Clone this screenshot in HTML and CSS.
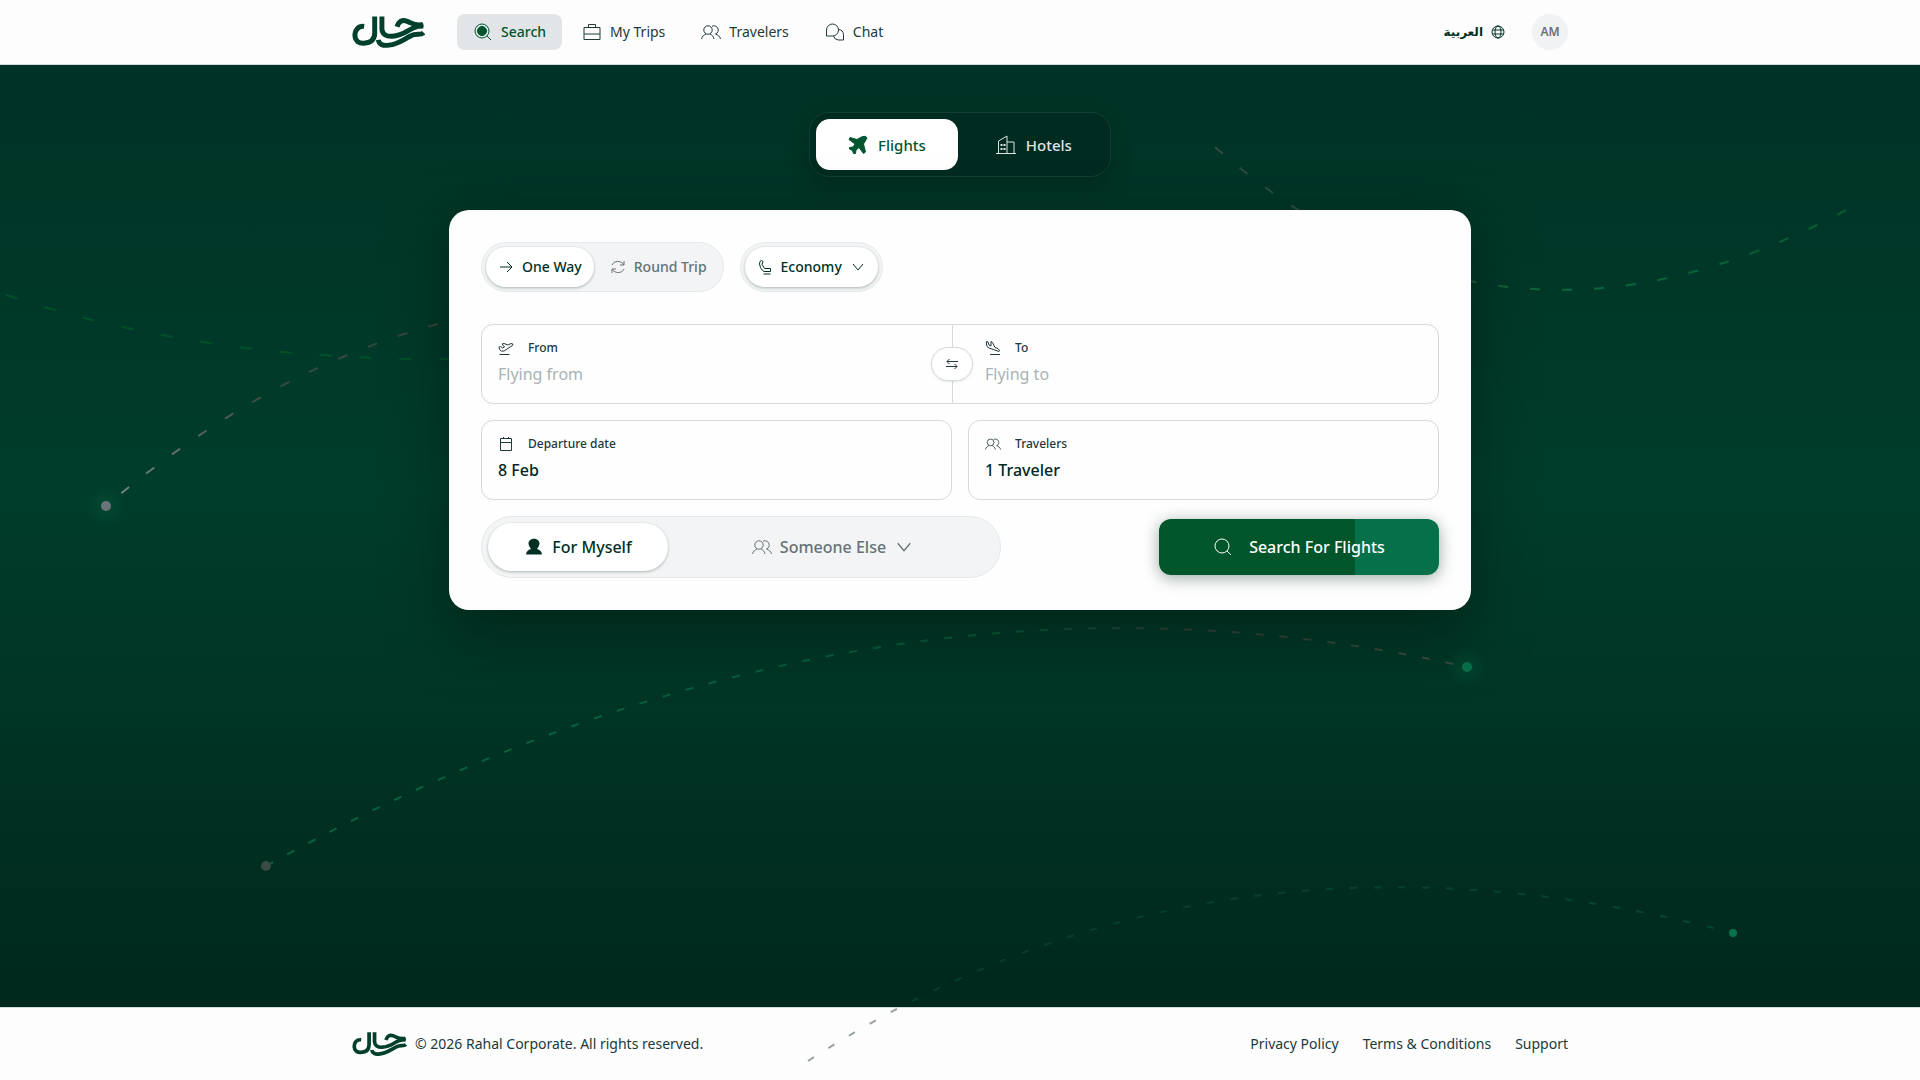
FILE: index.html
```html
<!DOCTYPE html>
<html lang="en">
<head>
  <meta charset="UTF-8" />
  <meta name="viewport" content="width=device-width, initial-scale=1.0"/>
  <title>Rahal Corporate</title>
  <link rel="stylesheet" href="styles.css">
</head>
<body>
  <!-- shared icons -->
  <svg class="sprite" aria-hidden="true">
    <symbol id="logo" viewBox="34 44 222 102">
      <g fill="none" stroke="#00402c" stroke-width="15">
        <path d="M71 78C53 76 42 90 43 107C44 123 56 130 70 129C92 128 103 117 103 98V48"/>
        <path d="M125 48V86C126 101 138 109 156 108C188 107 203 90 222 82C232 77 242 77 251 77"/>
        <path d="M171 79C176 62 187 57 200 62C214 67 228 78 250 72"/>
        <path d="M114 119C116 132 127 138 146 135C181 131 199 110 222 103C235 100 244 105 252 97"/>
      </g>
    </symbol>
    <symbol id="people" viewBox="0 0 20 20">
      <circle cx="7" cy="8" r="4.200"/>
      <path d="M.500 17C1 14.500 3 12.800 5 12M9 12C11 12.800 12.500 14.500 13 17M11 4.300C15 2.500 18 6 17 9.500Q16.300 11.500 14.500 12C17 12.800 19 14.500 19.500 17"/>
    </symbol>
    <symbol id="chevron" viewBox="0 0 16 16">
      <path d="M3 5l5 6 5-6"/>
    </symbol>
  </svg>

  <svg class="routes" viewBox="0 0 1920 1080" preserveAspectRatio="none" aria-hidden="true">
    <defs>
      <linearGradient id="routeGray">
        <stop offset="0" stop-color="#7c8683"/>
        <stop offset="0.500" stop-color="#38493f"/>
        <stop offset="1" stop-color="#34453e"/>
      </linearGradient>
      <linearGradient id="routeGreen">
        <stop offset="0" stop-color="#07633f"/>
        <stop offset="0.600" stop-color="#085c3d"/>
        <stop offset="0.750" stop-color="#32443c"/>
        <stop offset="1" stop-color="#38493f"/>
      </linearGradient>
      <linearGradient id="routeFall">
        <stop offset="0" stop-color="#34493f"/>
        <stop offset="0.400" stop-color="#1c5b3e"/>
        <stop offset="0.600" stop-color="#08683f"/>
        <stop offset="1" stop-color="#075c33"/>
      </linearGradient>
      <linearGradient id="routeFoot" gradientUnits="userSpaceOnUse" x1="800" y1="0" x2="1733" y2="0">
        <stop offset="0" stop-color="#99a19f"/>
        <stop offset="0.105" stop-color="#99a19f"/>
        <stop offset="0.110" stop-color="#063c2b"/>
        <stop offset="1" stop-color="#064630"/>
      </linearGradient>
      <radialGradient id="glow">
        <stop offset="0" stop-color="#0a6b45" stop-opacity="0.300"/>
        <stop offset="1" stop-color="#0a6b45" stop-opacity="0"/>
      </radialGradient>
    </defs>
    <g fill="none" stroke-width="2">
      <path d="M6 295Q205 361 449 359" stroke="#00502b" stroke-dasharray="12 28"/>
      <path d="M438 324Q267 370 106 506" stroke="url(#routeGray)" stroke-dasharray="10 22"/>
      <path d="M1215 147Q1500 398 1850 208" stroke="url(#routeFall)" stroke-dasharray="10 22"/>
      <path d="M266 866Q867 532 1467 667" stroke="url(#routeGreen)" stroke-dasharray="8 16"/>
      <path d="M808 1061Q1215 798 1733 933" stroke="url(#routeFoot)" stroke-dasharray="7 17"/>
    </g>
    <circle cx="106" cy="506" r="20" fill="url(#glow)"/>
    <circle cx="1467" cy="667" r="20" fill="url(#glow)"/>
    <circle cx="106" cy="506" r="5" fill="#6b7478"/>
    <circle cx="266" cy="866" r="5" fill="#3a4a45"/>
    <circle cx="1467" cy="667" r="5" fill="#07724b"/>
    <circle cx="1733" cy="933" r="4" fill="#07724b"/>
  </svg>

  <header class="header">
    <div class="container">
      <a class="brand" href="#" aria-label="Rahal"><svg class="logo"><use href="#logo"/></svg></a>
      <nav class="nav">
        <a class="nav-link active" href="#">
          <svg class="icon" viewBox="0 0 20 20"><circle cx="9" cy="9" r="7"/><circle cx="9" cy="9" r="4.500" fill="currentColor"/><path d="M14 14l4 4"/></svg>
          Search
        </a>
        <a class="nav-link" href="#">
          <svg class="icon" viewBox="0 0 20 20"><path d="M2 5.500h16v12H2zM2 12h16M6.500 5.500v-3h7v3"/></svg>
          My Trips
        </a>
        <a class="nav-link" href="#">
          <svg class="icon"><use href="#people"/></svg>
          Travelers
        </a>
        <a class="nav-link" href="#">
          <svg class="icon" viewBox="0 0 20 20"><path d="M1.500 14V8A6 6 0 1 1 7.500 14zM13.500 7.500A5.500 5.500 0 0 1 18.500 12.500V18H13.500A5.500 5.500 0 0 1 8.500 14"/></svg>
          Chat
        </a>
      </nav>
      <button class="lang" type="button">
        <span lang="ar">العربية</span>
        <svg class="icon-globe" viewBox="0 0 14 14"><circle cx="7" cy="7" r="6"/><ellipse cx="7" cy="7" rx="3" ry="6"/><path d="M1.500 5h11M1.500 9h11"/></svg>
      </button>
      <button class="avatar" type="button">AM</button>
    </div>
  </header>

  <main class="hero">
    <div class="tabs">
      <button class="tab active" type="button">
        <svg class="icon" viewBox="0 0 20 20"><path fill="currentColor" stroke-linejoin="round" d="M2 2.500L9 4.500L14.500 1.500Q18.500 .500 19 3L15.500 9L17.500 17L15.500 18.500L11 12.500L8 15L7.500 18.500L5.500 18.500L4.500 15.500L1.500 14L1.500 12.500L5 12L7 9L1 4.500Z"/></svg>
        Flights
      </button>
      <button class="tab" type="button">
        <svg class="icon" viewBox="0 0 20 20"><path d="M0 18.500h20M2.500 18V6L11 1v17M11 7h7v11"/><path stroke-width="2" stroke-dasharray="2 2" d="M5.500 9v7M8.500 9v7"/></svg>
        Hotels
      </button>
    </div>

    <form class="card">
      <div class="options">
        <div class="pill-group">
          <button class="pill active" type="button">
            <svg class="icon-sm" viewBox="0 0 16 16"><path d="M2 8h12M9 3l5 5-5 5"/></svg>
            One Way
          </button>
          <button class="pill" type="button">
            <svg class="icon-sm" viewBox="0 0 16 16"><path d="M2 6C4 1.500 11 1 14 6M14 2v4h-4M14 10C12 14.500 5 15 2 10M2 14v-4h4"/></svg>
            Round Trip
          </button>
        </div>
        <div class="pill-group">
          <button class="pill active" type="button">
            <svg class="icon-sm" viewBox="0 0 16 16"><path d="M3 2.500Q4.500 .500 6 2.500L5 5.500L7.500 9.500H13.500V12.500H7Q4.500 11 3.500 8.500L2.500 5zM6.500 15H13.500"/></svg>
            Economy
            <svg class="icon-sm"><use href="#chevron"/></svg>
          </button>
        </div>
      </div>

      <div class="fields">
        <div class="route-fields">
          <div class="field">
            <label for="from">
              <svg class="icon-sm" viewBox="0 0 16 16"><path d="M1.500 14.500h10M1 7l1.500-.500 2 1.500 2-1L4 4l2-.500 4 1.500 3-1.500Q16 3.500 14.500 5.500L6 11Q3 12 1.500 9.500z"/></svg>
              From
            </label>
            <input type="text" id="from" placeholder="Flying from" />
          </div>
          <div class="field">
            <label for="to">
              <svg class="icon-sm" viewBox="0 0 16 16"><path d="M5 14.500h10M1.500 1.500l1.500 .500 1 3 2 1V1.500l1.500 1 2.500 5 3 1Q15.500 10.500 14 11.500L4 8Q2 7 1.500 5z"/></svg>
              To
            </label>
            <input type="text" id="to" placeholder="Flying to" />
          </div>
          <button class="swap" type="button" aria-label="Swap">
            <svg class="icon-swap" viewBox="0 0 12 12"><path d="M3.500 1L1 3.500L3.500 6M1 3.500h11M8.500 6L11 8.500L8.500 11M0 8.500h11"/></svg>
          </button>
        </div>
        <div class="field boxed">
          <label for="departure">
            <svg class="icon-sm" viewBox="0 0 16 16"><path d="M2.500 2.500h11v12h-11zM2.500 6.500h11M5.500 1v2M10.500 1v2"/></svg>
            Departure date
          </label>
          <input type="text" id="departure" value="8 Feb" />
        </div>
        <div class="field boxed">
          <label for="travelers">
            <svg class="icon-sm"><use href="#people"/></svg>
            Travelers
          </label>
          <input type="text" id="travelers" value="1 Traveler" />
        </div>
      </div>

      <div class="actions">
        <div class="who">
          <button class="who-btn active" type="button">
            <svg class="icon" viewBox="0 0 20 20"><path fill="currentColor" stroke="none" d="M7 12Q4.500 9 4.500 6.500C4.500 0 15.500 0 15.500 6.500Q15.500 9 13 12Q17.500 13 18 17.500H2Q2.500 13 7 12Z"/></svg>
            For Myself
          </button>
          <button class="who-btn" type="button">
            <svg class="icon"><use href="#people"/></svg>
            Someone Else
            <svg class="icon"><use href="#chevron"/></svg>
          </button>
        </div>
        <button class="search-btn" type="submit">
          <svg class="icon" viewBox="0 0 20 20"><circle cx="9" cy="9" r="7"/><path d="M14 14l4 4"/></svg>
          Search For Flights
        </button>
      </div>
    </form>
  </main>

  <footer class="footer">
    <div class="container">
      <svg class="logo-small"><use href="#logo"/></svg>
      <span class="copyright">© 2026 Rahal Corporate. All rights reserved.</span>
      <nav class="footer-links">
        <a href="#">Privacy Policy</a>
        <a href="#">Terms &amp; Conditions</a>
        <a href="#">Support</a>
      </nav>
    </div>
  </footer>
</body>
</html>
```
FILE: styles.css
```css
* {
  box-sizing: border-box;
}

body {
  margin: 0;
  min-height: 100vh;
  position: relative;
  display: flex;
  flex-direction: column;
  font-family: 'Noto Sans', 'DejaVu Sans', sans-serif;
  font-size: 14px;
  line-height: 20px;
  color: #21393a;
  background: #fdfdfd;
}

button,
input {
  font: inherit;
  color: inherit;
  border: none;
  padding: 0;
  background: none;
}

button {
  cursor: pointer;
}

a {
  color: inherit;
  text-decoration: none;
}

svg {
  flex-shrink: 0;
  fill: none;
  stroke: currentColor;
}

.sprite {
  position: absolute;
  width: 0;
  height: 0;
}

.routes {
  position: absolute;
  inset: 0;
  width: 100%;
  height: 100%;
  stroke: none;
  z-index: 1;
  pointer-events: none;
}

.icon {
  width: 20px;
  height: 20px;
}

.icon-sm {
  width: 16px;
  height: 16px;
}

.icon-globe {
  width: 14px;
  height: 14px;
}

.icon-swap {
  width: 12px;
  height: 12px;
}

.container {
  display: flex;
  align-items: center;
  width: 100%;
  max-width: 1280px;
  margin: 0 auto;
  padding: 0 32px;
}

/* header */
.header {
  display: flex;
  height: 65px;
  border-bottom: 1px solid #d5dadb;
}

.brand {
  display: flex;
  margin-right: 32px;
}

.logo {
  width: 73px;
  height: 34px;
}

.nav {
  display: flex;
  gap: 4px;
}

.nav-link {
  display: flex;
  align-items: center;
  gap: 8px;
  padding: 8px 16px;
  border-radius: 8px;
}

.nav-link.active {
  background: #e1e5e7;
  color: #00552e;
  font-weight: 500;
}

.lang {
  display: flex;
  align-items: center;
  gap: 8px;
  margin-left: auto;
  margin-right: 27px;
  color: #003024;
  font-size: 12px;
  font-weight: 600;
}

.avatar {
  width: 36px;
  height: 36px;
  border-radius: 50%;
  background: #f0f2f4;
  color: #657277;
  font-size: 12px;
  font-weight: 600;
}

/* hero */
.hero {
  flex: 1;
  display: flex;
  flex-direction: column;
  align-items: center;
  gap: 33px;
  padding: 47px 24px;
  background: linear-gradient(#003225, #003d2b 45%, #00281d);
}

.tabs {
  display: flex;
  gap: 6px;
  padding: 6px;
  border: 1px solid #123f33;
  border-radius: 20px;
  background: #002b20;
  box-shadow: 0 8px 20px rgba(0, 30, 20, 0.4);
}

.tab {
  display: flex;
  align-items: center;
  justify-content: center;
  gap: 10px;
  height: 51px;
  padding: 0 32px;
  border-radius: 14px;
  color: #dfe4e3;
  font-size: 15px;
  font-weight: 500;
}

.tab.active {
  background: #fff;
  color: #00552e;
}

.card {
  position: relative;
  z-index: 2;
  width: 100%;
  max-width: 1022px;
  padding: 32px;
  border-radius: 20px;
  background: #fefefe;
  box-shadow: 0 20px 60px rgba(0, 20, 12, 0.5);
}

.options {
  display: flex;
  gap: 16px;
  margin-bottom: 32px;
}

.pill-group {
  display: flex;
  gap: 4px;
  padding: 4px;
  border: 1px solid #e6e9eb;
  border-radius: 25px;
  background: #f2f4f5;
}

.pill {
  display: flex;
  align-items: center;
  gap: 8px;
  height: 40px;
  padding: 0 12px;
  border-radius: 20px;
  color: #657277;
  font-weight: 500;
}

.pill.active {
  background: #fff;
  color: #002f24;
  box-shadow: 0 1px 3px rgba(0, 30, 20, 0.3);
}

.fields {
  display: grid;
  grid-template-columns: 1fr 1fr;
  gap: 16px;
}

.route-fields {
  position: relative;
  grid-column: span 2;
  display: grid;
  grid-template-columns: 470px 1fr;
  border: 1px solid #d5dadc;
  border-radius: 12px;
}

.field {
  height: 78px;
  padding: 12px 16px;
}

.field + .field:not(.boxed) {
  border-left: 1px solid #d5dadc;
  padding-left: 32px;
}

.field.boxed {
  height: 80px;
  border: 1px solid #d5dadc;
  border-radius: 12px;
}

.field label {
  display: flex;
  align-items: center;
  gap: 14px;
  height: 22px;
  font-size: 12px;
  font-weight: 500;
}

.field input {
  display: block;
  width: 100%;
  height: 30px;
  outline: none;
  color: #00281e;
  font-size: 16px;
  font-weight: 500;
}

.field input::placeholder {
  color: #a9b2b5;
  font-weight: 400;
  opacity: 1;
}

.swap {
  position: absolute;
  left: 470px;
  top: 50%;
  transform: translate(-50%, -50%);
  display: flex;
  align-items: center;
  justify-content: center;
  width: 42px;
  height: 34px;
  border: 1px solid #d5dadc;
  border-radius: 17px;
  background: #fff;
  box-shadow: 0 1px 2px rgba(0, 30, 20, 0.1);
}

.actions {
  display: flex;
  align-items: center;
  justify-content: space-between;
  margin-top: 16px;
}

.who {
  display: flex;
  gap: 4px;
  width: 520px;
  padding: 6px;
  border: 1px solid #e6e9eb;
  border-radius: 31px;
  background: #f2f4f5;
}

.who-btn {
  flex: 1;
  display: flex;
  align-items: center;
  justify-content: center;
  gap: 8px;
  height: 48px;
  border-radius: 24px;
  color: #657277;
  font-size: 16px;
  font-weight: 500;
}

.who-btn.active {
  flex: 0 0 180px;
  background: #fff;
  color: #002f24;
  box-shadow: 0 1px 3px rgba(0, 30, 20, 0.3);
}

.search-btn {
  display: flex;
  align-items: center;
  justify-content: center;
  gap: 16px;
  width: 280px;
  height: 56px;
  border-radius: 12px;
  background: linear-gradient(90deg, #00552b 70%, #05704a 70%);
  color: #fff;
  font-size: 16px;
  font-weight: 500;
  box-shadow: 0 3px 16px rgba(0, 40, 30, 0.4);
}

/* footer */
.footer {
  display: flex;
  height: 73px;
  border-top: 1px solid #d5dadb;
}

.logo-small {
  width: 55px;
  height: 26px;
  margin-right: 8px;
}

.footer-links {
  display: flex;
  gap: 24px;
  margin-left: auto;
}
```
